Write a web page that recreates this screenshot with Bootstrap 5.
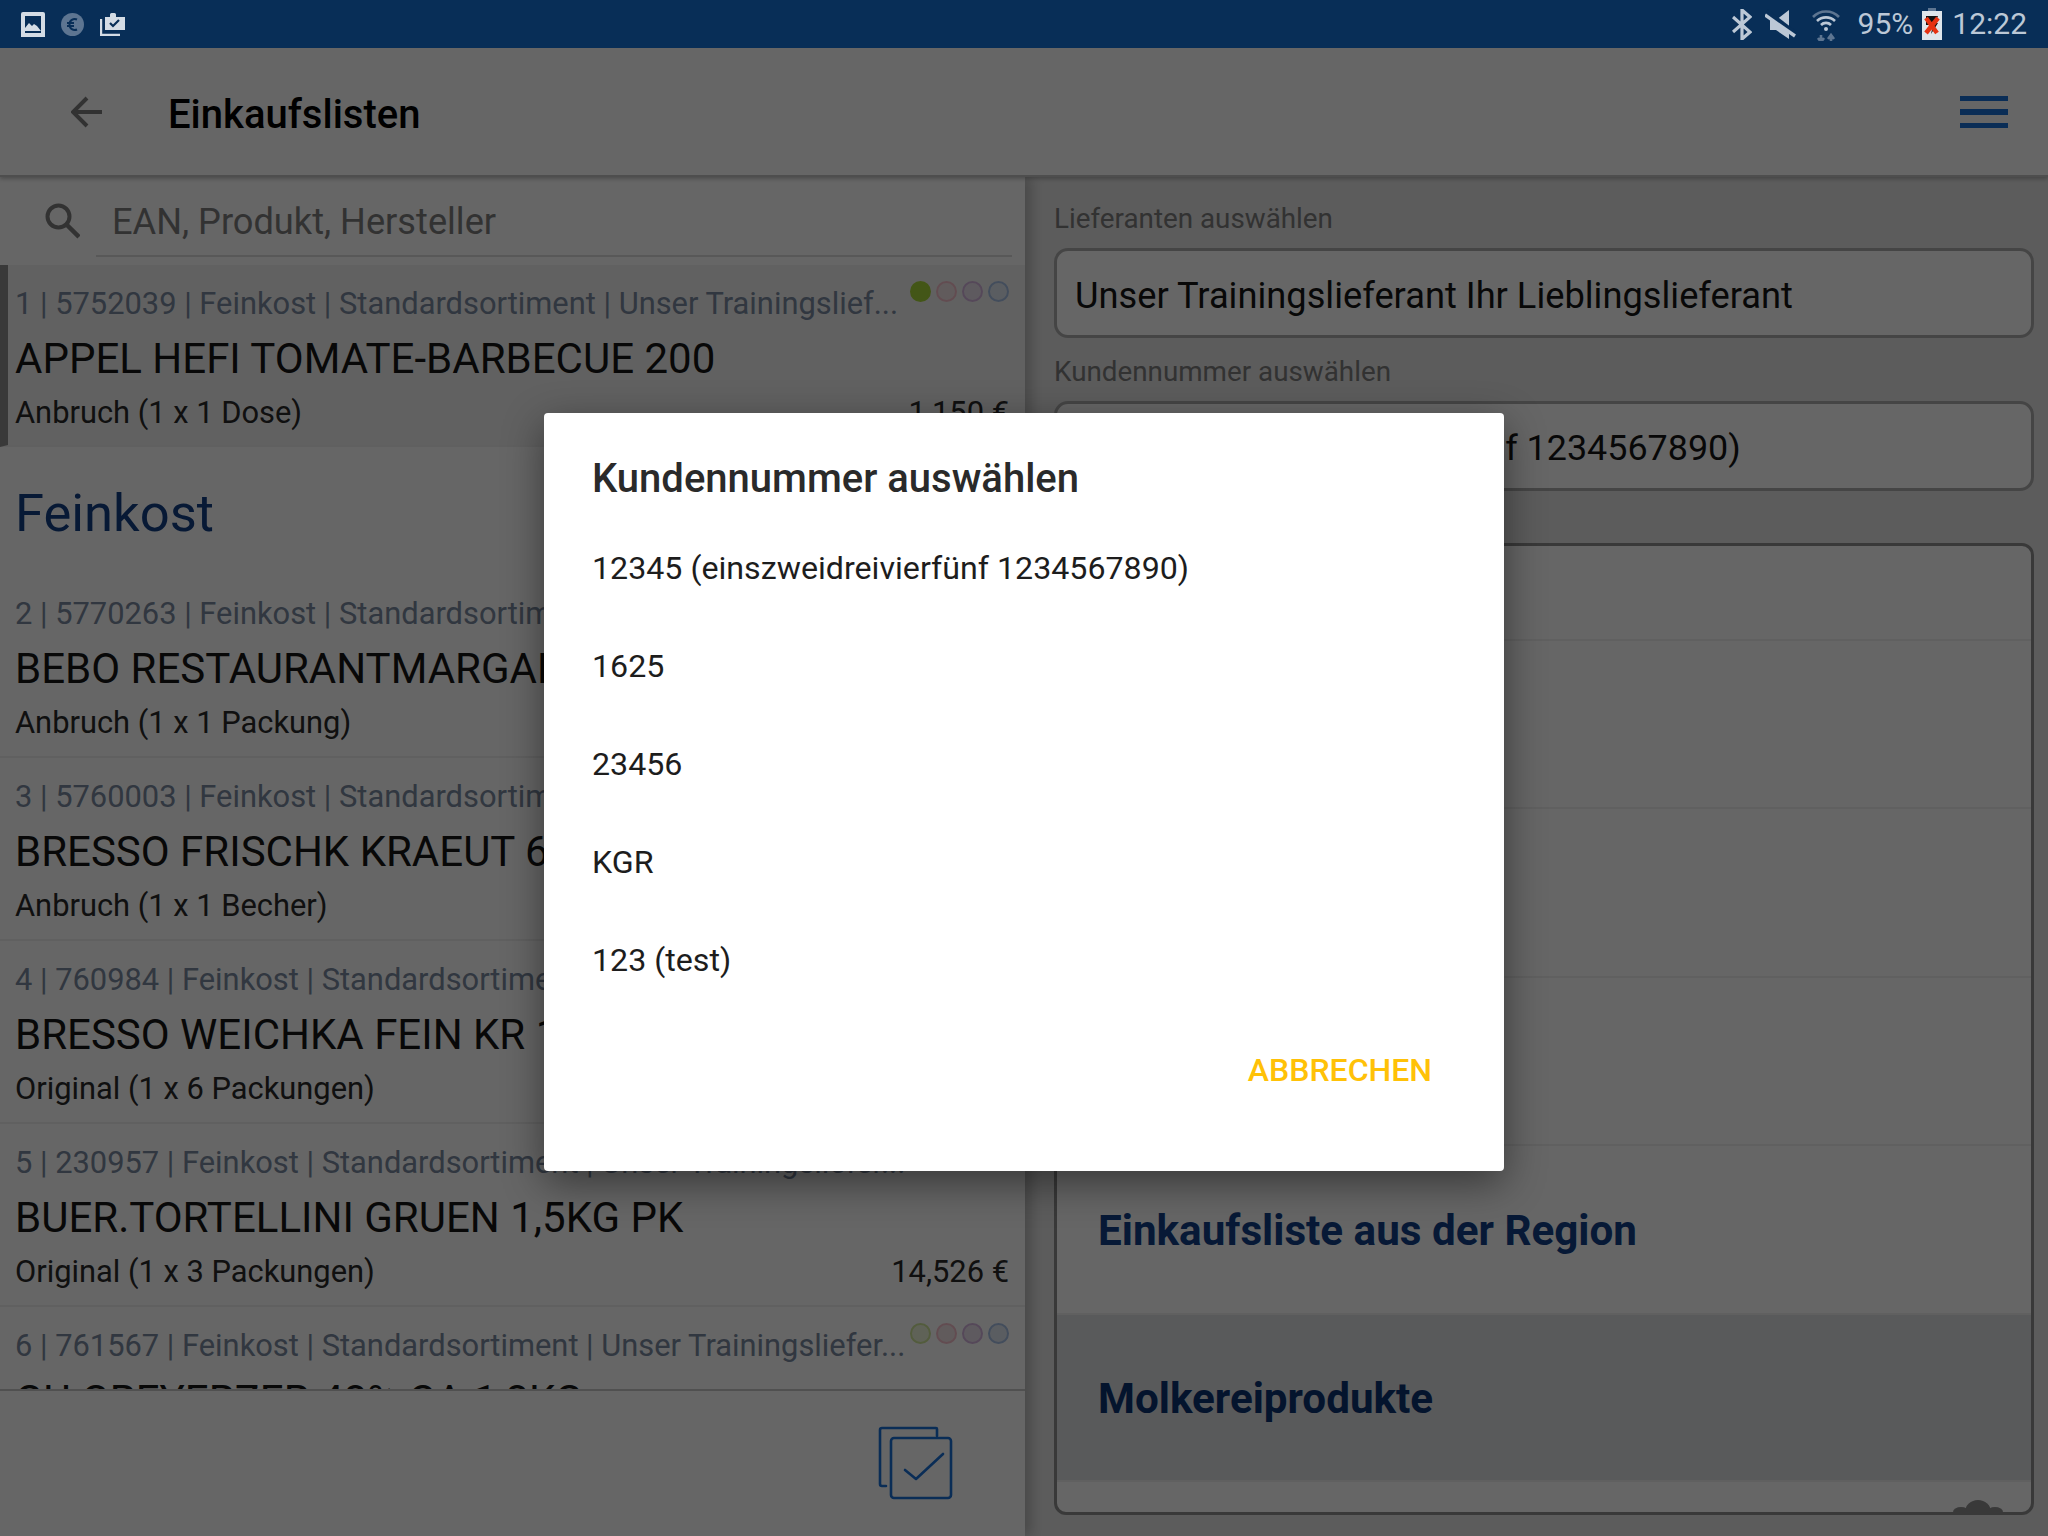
<!DOCTYPE html>
<html lang="de">
<head>
<meta charset="utf-8">
<title>Einkaufslisten</title>
<link rel="stylesheet" href="https://cdn.jsdelivr.net/npm/bootstrap@5.3.0/dist/css/bootstrap.min.css">
<style>
html,body{margin:0;height:100%;overflow:hidden;background:#fff;font-family:Roboto,"Liberation Sans",sans-serif}
.app-shell{width:2048px;height:1536px;overflow:hidden}
.status-strip{height:48px;flex:none;background:#082e57;color:#bcc8d6;z-index:5;padding-left:21px;padding-right:21px;font-size:30px}
.status-strip svg{display:block;flex:none}
.gap-mute{margin-left:13px}.gap-wifi{margin-left:16px}.gap-pct{margin-left:17.5px;line-height:1}.gap-batt{margin-left:9px}.gap-time{margin-left:10px;line-height:1}
.tool-strip{height:129px;flex:none;background:#fff;border-bottom:2px solid #c4c4c4;box-shadow:0 2px 4px rgba(0,0,0,.25);z-index:2}
.back-ico{margin-left:71px;margin-right:65px}
.tool-title{font-size:40px;font-weight:500;color:#000;line-height:1;margin-top:6px}
.burger{margin-right:40px;margin-left:auto}
.main-row{min-height:0}
.left-pane{width:1025px;background:#fff;box-shadow:6px 0 12px rgba(0,0,0,.22);z-index:1}
.search-row{height:81px;flex:none;padding-left:45px;margin-bottom:7px}
.search-ico{margin-top:26px}
.search-field{margin-left:16px;margin-right:13px;height:80px;padding-left:16px;border-bottom:2px solid #dcdcdc;font-size:36.2px;color:#7e7e7e;line-height:90px}
.list-scroll{overflow:hidden;min-height:0}
.prod-row{height:183px;padding:19px 16px 0 15px;border-bottom:2px solid #efefef;position:relative;flex:none}
.prod-row.is-current{background:#f3f3f3;border-left:8px solid #8f8f8f;padding-left:7px;height:182px}
.prod-meta{font-size:30.85px;line-height:40px;color:#7a8aa0;white-space:nowrap;overflow:hidden}
.prod-name{font-size:42px;line-height:56px;color:#141414;margin-top:7px;white-space:nowrap}
.prod-sub{font-size:30.85px;line-height:40px;color:#2a2a2a;margin-top:6px}
.prod-price{color:#2a2a2a}
.dot-row{position:absolute;top:16px;right:16px;gap:5px}
.dot-mark{width:21px;height:21px;border-radius:50%;border:2px solid;display:block}
.dot-on{background:#a9d63a;border-color:#a9d63a}
.dot-green{background:#eef5da;border-color:#cfe59a}
.dot-pink{background:#f3e4e6;border-color:#f5bfca}
.dot-violet{background:#ece2ee;border-color:#d5b4de}
.dot-blue{background:#e2e8f2;border-color:#a7c0e6}
.cat-head{height:128px;flex:none;font-size:52.5px;color:#133f85;padding:40px 0 0 15px;line-height:52px}
.foot-strip{height:147px;flex:none;border-top:2px solid #c8c8c8;background:#fff;padding-left:878px;padding-top:35px}
.check-stack{fill:none;stroke:#1a70d8;stroke-width:2.6;stroke-linejoin:round;stroke-linecap:round}
.burger-bars{fill:#1a70d8}
.right-pane{background:#e6e6e6;padding:0 14px 0 29px;min-width:0}
.field-cap{font-size:27.8px;color:#7d7d7d;line-height:32px}
.pick-box{height:90px;background:#fff;border:3px solid #adadad;border-radius:14px;font-size:36.25px;color:#151515;padding-left:18px;line-height:89px;white-space:nowrap}
.pick-alt{font-size:35.9px}
.mt-cap1{margin-top:26px}
.mt-cap2{margin-top:18px}
.mt-box{margin-top:13px}
.group-box{margin-top:52px;height:972px;background:#fff;border:3px solid #8f8f8f;border-radius:12px;overflow:hidden;position:relative}
.group-line{height:168.6px;flex:none;border-bottom:2px solid #f1f1f1;padding-left:41px;font-size:42.2px;font-weight:700;color:#123f88;line-height:169px;white-space:nowrap}
.group-line.first-line{height:94.5px}
.group-line.is-picked{height:167px;background:#dfe0e3;color:#0c3270;line-height:167px}
.scroll-knob{position:absolute;right:28px;bottom:0}
.scrim-layer{position:absolute;left:0;right:0;top:48px;bottom:0;background:rgba(0,0,0,.6);z-index:3}
.pick-dialog{position:absolute;left:544px;top:413px;width:960px;height:758px;background:#fff;border-radius:4px;box-shadow:0 12px 40px rgba(0,0,0,.45);z-index:4;padding:0 48px}
.pick-dialog h2{font-size:40px;font-weight:500;color:#2a2a2a;margin:0;padding-top:43px;line-height:46px;margin-bottom:42px}
.dlg-item{height:98px;font-size:32.2px;color:#1d1d1d;line-height:48px;flex:none}
.dlg-cancel{position:absolute;right:72px;top:637px;font-size:32px;font-weight:500;color:#ffc107;line-height:40px}
</style>
</head>
<body>
<div class="app-shell d-flex flex-column position-relative">
  <div class="status-strip d-flex align-items-center position-relative">
    <svg width="24" height="25" viewBox="0 0 24 25"><rect width="24" height="25" rx="2" fill="#d4dce5"/><rect x="4" y="4" width="16" height="17" fill="#082e57"/><path d="M4 19v-3l4-5 3 3 2-2 3 2 4 5z" fill="#d4dce5"/><rect y="21" width="24" height="4" fill="#d4dce5"/></svg>
    <svg class="ms-3" width="23" height="23" viewBox="0 0 23 23"><circle cx="11.5" cy="11.5" r="11.5" fill="#5d7591"/><path d="M16 6.5a5.3 5.3 0 0 0-7.5 5a5.3 5.3 0 0 0 7.5 5M6 10h7M6 13h7" fill="none" stroke="#082e57" stroke-width="2"/></svg>
    <svg class="ms-3" width="26" height="24" viewBox="0 0 26 24"><path d="M1 7v16h19" fill="none" stroke="#d4dce5" stroke-width="2.4"/><path d="M5 5h5V2.5a1.5 1.5 0 0 1 1.5-1.5h3A1.5 1.5 0 0 1 16 2.500V5h9v13H5z" fill="#d4dce5"/><path d="M10 11l3 3 6-6" fill="none" stroke="#082e57" stroke-width="2.2"/></svg>
    <svg class="ms-auto" width="20" height="31" viewBox="0 0 20 31"><path d="M1 8l17 15-8 7V1l8 7L1 23" fill="none" stroke="#bcc8d6" stroke-width="3.200"/></svg>
    <svg class="gap-mute" width="31" height="31" viewBox="0 0 31 31"><path d="M5 11h6L24 1v29L11 21H5z" fill="#bcc8d6"/><path d="M1 3l29 22" stroke="#082e57" stroke-width="6"/><path d="M0 6l30 21" stroke="#bcc8d6" stroke-width="3.400"/></svg>
    <svg class="gap-wifi" width="28" height="33" viewBox="0 0 28 33"><path d="M1 9a18 18 0 0 1 26 0" fill="none" stroke="#5d7591" stroke-width="2.600"/><path d="M5 13a13 13 0 0 1 18 0" fill="none" stroke="#bcc8d6" stroke-width="2.600"/><path d="M9 17a7 7 0 0 1 10 0" fill="none" stroke="#bcc8d6" stroke-width="2.600"/><circle cx="14" cy="21" r="2" fill="#bcc8d6"/><path d="M9 27v7M6 30l3 4 3-4M19 34v-7M16 31l3-4 3 4" fill="none" stroke="#5d7591" stroke-width="2.600"/></svg>
    <span class="gap-pct">95%</span>
    <svg class="gap-batt" width="20" height="32" viewBox="0 0 20 32"><rect x="6" y="0" width="8" height="4" fill="#5d7591"/><rect y="3" width="20" height="29" fill="#dfe5ea"/><path d="M4 8h12l-3 7h3l-7 11 2-9H4z" fill="#111"/><path d="M4 10l11 15M16 10L4 25" stroke="#e63212" stroke-width="4.500"/></svg>
    <span class="gap-time">12:22</span>
  </div>

  <div class="tool-strip d-flex align-items-center">
    <svg class="back-ico" width="32" height="32" viewBox="0 0 32 32"><path d="M31 16H3M16 2L2 16l14 14" fill="none" stroke="#7e7e7e" stroke-width="4"/></svg>
    <div class="tool-title">Einkaufslisten</div>
    <svg class="burger" width="48" height="32" viewBox="0 0 48 32"><g class="burger-bars"><rect width="48" height="5"/><rect y="13" width="48" height="6"/><rect y="27" width="48" height="5"/></g></svg>
  </div>

  <div class="main-row d-flex flex-grow-1">
    <div class="left-pane d-flex flex-column">
      <div class="search-row d-flex">
        <svg class="search-ico" width="35" height="36" viewBox="0 0 35 36"><circle cx="13.500" cy="13.500" r="11" fill="none" stroke="#7e7e7e" stroke-width="4"/><path d="M21 21l13 13" stroke="#7e7e7e" stroke-width="4.500"/></svg>
        <div class="search-field flex-grow-1">EAN, Produkt, Hersteller</div>
      </div>
      <div class="list-scroll d-flex flex-column flex-grow-1">
        <div class="prod-row is-current">
          <div class="prod-meta">1 | 5752039 | Feinkost | Standardsortiment | Unser Trainingslief...</div>
          <div class="dot-row d-flex"><span class="dot-mark dot-on"></span><span class="dot-mark dot-pink"></span><span class="dot-mark dot-violet"></span><span class="dot-mark dot-blue"></span></div>
          <div class="prod-name">APPEL HEFI TOMATE-BARBECUE 200</div>
          <div class="prod-sub d-flex justify-content-between"><span>Anbruch (1 x 1 Dose)</span><span class="prod-price">1,150 €</span></div>
        </div>
        <div class="cat-head">Feinkost</div>
        <div class="prod-row">
          <div class="prod-meta">2 | 5770263 | Feinkost | Standardsortiment | Unser Trainingslief...</div>
          <div class="prod-name">BEBO RESTAURANTMARGARINE</div>
          <div class="prod-sub">Anbruch (1 x 1 Packung)</div>
        </div>
        <div class="prod-row">
          <div class="prod-meta">3 | 5760003 | Feinkost | Standardsortiment | Unser Trainingslief...</div>
          <div class="prod-name">BRESSO FRISCHK KRAEUT 60%</div>
          <div class="prod-sub">Anbruch (1 x 1 Becher)</div>
        </div>
        <div class="prod-row">
          <div class="prod-meta">4 | 760984 | Feinkost | Standardsortiment | Unser Trainingsliefer...</div>
          <div class="prod-name">BRESSO WEICHKA FEIN KR 150G</div>
          <div class="prod-sub">Original (1 x 6 Packungen)</div>
        </div>
        <div class="prod-row">
          <div class="prod-meta">5 | 230957 | Feinkost | Standardsortiment | Unser Trainingsliefer...</div>
          <div class="prod-name">BUER.TORTELLINI GRUEN 1,5KG PK</div>
          <div class="prod-sub d-flex justify-content-between"><span>Original (1 x 3 Packungen)</span><span class="prod-price">14,526 €</span></div>
        </div>
        <div class="prod-row">
          <div class="prod-meta">6 | 761567 | Feinkost | Standardsortiment | Unser Trainingsliefer...</div>
          <div class="dot-row d-flex"><span class="dot-mark dot-green"></span><span class="dot-mark dot-pink"></span><span class="dot-mark dot-violet"></span><span class="dot-mark dot-blue"></span></div>
          <div class="prod-name">GU GREYERZER 48% CA 1,8KG</div>
        </div>
      </div>
      <div class="foot-strip">
        <svg width="76" height="76" viewBox="0 0 76 76"><g class="check-stack"><path d="M59 10V3a1 1 0 0 0-1-1H4a2 2 0 0 0-2 2v54a2 2 0 0 0 2 2h4"/><rect x="13" y="12" width="60" height="60" rx="3"/><path d="M27 44l11 9 27-25"/></g></svg>
      </div>
    </div>

    <div class="right-pane flex-grow-1">
      <div class="field-cap mt-cap1">Lieferanten auswählen</div>
      <div class="pick-box mt-box">Unser Trainingslieferant Ihr Lieblingslieferant</div>
      <div class="field-cap mt-cap2">Kundennummer auswählen</div>
      <div class="pick-box pick-alt mt-box">12345 (einszweidreivierfünf 1234567890)</div>
      <div class="group-box d-flex flex-column">
        <div class="group-line first-line"></div>
        <div class="group-line">Molkereiprodukte</div>
        <div class="group-line">Tiefkühlprodukte</div>
        <div class="group-line">Getränke</div>
        <div class="group-line">Einkaufsliste aus der Region</div>
        <div class="group-line is-picked">Molkereiprodukte</div>
        <svg class="scroll-knob" width="50" height="12" viewBox="0 0 50 12"><ellipse cx="25" cy="12" rx="13" ry="12" fill="#8f8f8f"/><ellipse cx="8" cy="12" rx="8" ry="5" fill="#8f8f8f"/><ellipse cx="42" cy="12" rx="8" ry="5" fill="#8f8f8f"/></svg>
      </div>
    </div>
  </div>

  <div class="scrim-layer"></div>

  <div class="pick-dialog d-flex flex-column" role="dialog">
    <h2>Kundennummer auswählen</h2>
    <div class="dlg-item">12345 (einszweidreivierfünf 1234567890)</div>
    <div class="dlg-item">1625</div>
    <div class="dlg-item">23456</div>
    <div class="dlg-item">KGR</div>
    <div class="dlg-item">123 (test)</div>
    <div class="dlg-cancel">ABBRECHEN</div>
  </div>
</div>
<script src="https://cdn.jsdelivr.net/npm/bootstrap@5.3.0/dist/js/bootstrap.bundle.min.js"></script>
</body>
</html>
